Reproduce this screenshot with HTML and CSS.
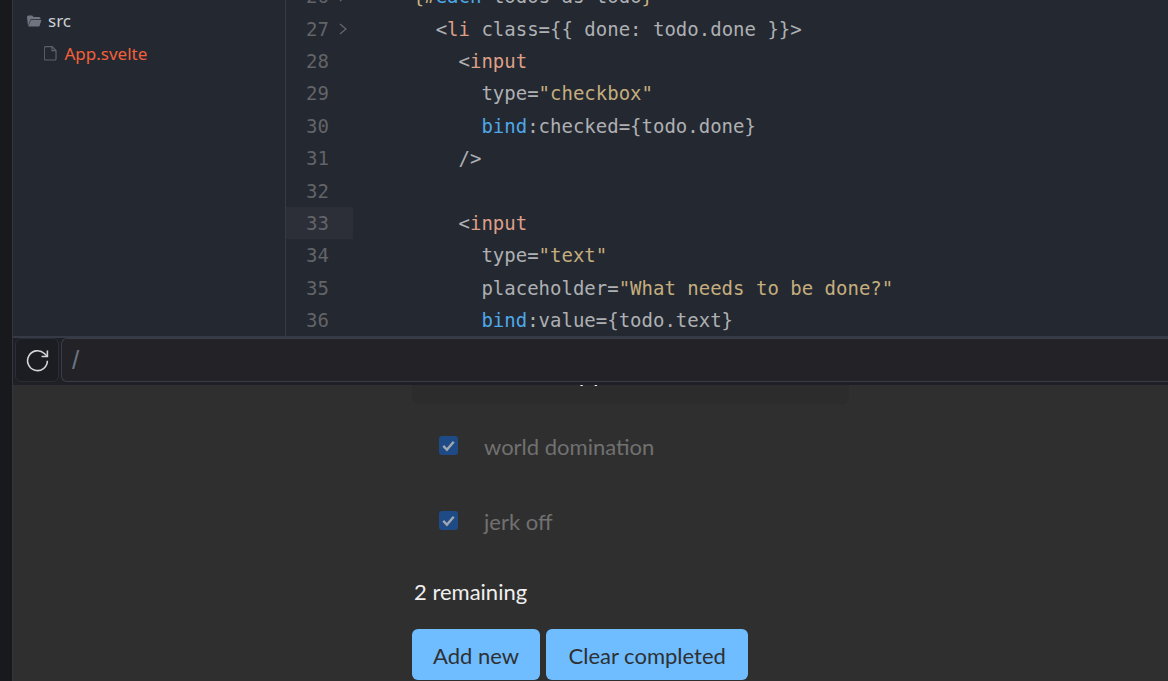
FILE: index.html
```html
<!DOCTYPE html>
<html lang="en">
<head>
<meta charset="utf-8">
<title>App.svelte</title>
<link rel="stylesheet" href="styles.css">
</head>
<body>
<div class="rail"></div>
<main class="app">
  <section class="workspace">
    <aside class="sidebar">
      <div class="folder">
        <svg class="folder-icon" viewBox="0 0 15 12"><path d="M0 2a1.5 1.5 0 0 1 1.5-1.5h3.6l1.5 1.6h5.4a1.5 1.5 0 0 1 1.5 1.5v.6H3.6L1 11z"/><path d="M3.9 5h10.6l-2.2 6.4H1.2z"/></svg>
        <span>src</span>
      </div>
      <div class="file">
        <svg class="file-icon" viewBox="0 0 13 15"><path d="M1.5.7h6.6l3.9 3.9v8.2a1.2 1.2 0 0 1-1.2 1.2H1.5a1.2 1.2 0 0 1-1.2-1.2V1.9A1.2 1.2 0 0 1 1.5.7zM8 .7v3.9h4"/></svg>
        <span>App.svelte</span>
      </div>
    </aside>
    <div class="editor">
      <div class="lines">
        <div class="line"><span class="num">26</span><span class="fold"><svg viewBox="0 0 8 12"><path d="M1 1 7 6 1 11"/></svg></span><span class="code">    <span class="p">{</span><span class="p">#</span><span class="kw">each</span> todos as todo<span class="p">}</span></span></div>
        <div class="line"><span class="num">27</span><span class="fold"><svg viewBox="0 0 8 12"><path d="M1 1 7 6 1 11"/></svg></span><span class="code">      &lt;<span class="tag">li</span> class={{ done: todo.done }}&gt;</span></div>
        <div class="line"><span class="num">28</span><span class="fold"></span><span class="code">        &lt;<span class="tag">input</span></span></div>
        <div class="line"><span class="num">29</span><span class="fold"></span><span class="code">          type=<span class="str">"checkbox"</span></span></div>
        <div class="line"><span class="num">30</span><span class="fold"></span><span class="code">          <span class="kw">bind</span>:checked={todo.done}</span></div>
        <div class="line"><span class="num">31</span><span class="fold"></span><span class="code">        /&gt;</span></div>
        <div class="line"><span class="num">32</span><span class="fold"></span><span class="code"></span></div>
        <div class="line active"><span class="num">33</span><span class="fold"></span><span class="code">        &lt;<span class="tag">input</span></span></div>
        <div class="line"><span class="num">34</span><span class="fold"></span><span class="code">          type=<span class="str">"text"</span></span></div>
        <div class="line"><span class="num">35</span><span class="fold"></span><span class="code">          placeholder=<span class="str">"What needs to be done?"</span></span></div>
        <div class="line"><span class="num">36</span><span class="fold"></span><span class="code">          <span class="kw">bind</span>:value={todo.text}</span></div>
      </div>
    </div>
  </section>
  <div class="toolbar">
    <button class="reload" type="button" aria-label="Reload">
      <svg viewBox="0 0 24 24"><path d="M20.8 12.2a8.8 8.8 0 1 1-2.7-6.4L20.8 8.4"/><path d="M20.8 3.2v5.2h-5.2"/></svg>
    </button>
    <div class="address">/</div>
  </div>
  <section class="preview">
    <div class="content">
      <div class="card"><span class="clipped">pp</span></div>
      <ul class="todos">
        <li class="todo"><span class="check"><svg viewBox="0 0 20 20"><path d="M4.5 10.5 8.3 14.5 15.5 6"/></svg></span><span class="label">world domination</span></li>
        <li class="todo"><span class="check"><svg viewBox="0 0 20 20"><path d="M4.5 10.5 8.3 14.5 15.5 6"/></svg></span><span class="label">jerk off</span></li>
      </ul>
      <p class="remaining">2 remaining</p>
      <div class="actions">
        <button class="btn" type="button">Add new</button>
        <button class="btn btn-wide" type="button">Clear completed</button>
      </div>
    </div>
  </section>
</main>
</body>
</html>
```
FILE: styles.css
```css
* { box-sizing: border-box; }
html, body { margin: 0; height: 100%; overflow: hidden; }
body { display: flex; width: 1168px; height: 681px; background: #2f2f2f; font-family: "Noto Sans", sans-serif; }
.rail { width: 12px; flex: none; background: #18191d; }
.app { flex: 1; min-width: 0; display: flex; flex-direction: column; border-left: 1px solid #33363f; }

.workspace { height: 336px; flex: none; display: flex; background: #242831; overflow: hidden; }
.sidebar { width: 273px; flex: none; padding-top: 4px; border-right: 1px solid #363a45; font-size: 17px; }
.folder { height: 33px; display: flex; align-items: center; gap: 6px; padding-left: 14px; color: #ccd0d6; }
.folder-icon { width: 15px; height: 12px; fill: #6f7480; }
.file { height: 33px; display: flex; align-items: center; gap: 7.5px; padding-left: 31px; color: #f4603a; }
.file-icon { width: 13px; height: 15px; fill: none; stroke: #5d616c; stroke-width: 1.2; }

.editor { flex: 1; min-width: 0; overflow: hidden; }
.lines { margin-top: -20px; font-family: "DejaVu Sans Mono", monospace; font-size: 19px; }
.line { height: 32.4px; display: flex; align-items: center; white-space: pre; color: #aeb0b3; }
.num { width: 43px; flex: none; text-align: right; color: #626468; }
.fold { width: 24px; flex: none; display: flex; justify-content: center; padding-left: 4px; }
.fold svg { width: 8px; height: 12px; fill: none; stroke: #686a70; stroke-width: 1.1; }
.line.active .num, .line.active .fold { background: #2c2f38; height: 100%; display: flex; align-items: center; }
.line.active .num { justify-content: flex-end; }
.code { padding-left: 14px; }
.p { color: #c8b27f; }
.kw { color: #4ea8e8; }
.tag { color: #dd9f88; }
.str { color: #c4ae7e; }

.toolbar { height: 49px; flex: none; display: flex; gap: 2px; padding: 0 0 0 2px; background: #1f2025; border-top: 2px solid #363946; }
.reload { width: 44px; height: 44px; flex: none; padding: 0; display: flex; align-items: center; justify-content: center; background: #1c1d22; border: 1px solid #2a2d37; border-radius: 6px; }
.reload svg { width: 27px; height: 27px; fill: none; stroke: #d6d6d8; stroke-width: 1.4; }
.address { flex: 1; height: 44px; padding-left: 10px; line-height: 42px; font-family: "Liberation Sans", sans-serif; font-size: 26px; color: #6b7485; background: #222227; border: 1px solid #3a3d49; border-right: 0; border-radius: 6px 0 0 6px; }

.preview { flex: 1; min-height: 0; overflow: hidden; }
.content { width: 440px; margin-left: 399px; display: flex; flex-direction: column; font-family: Lato, sans-serif; font-size: 22px; }
.card { height: 19px; margin-right: 3px; position: relative; background: #2c2c2c; border-radius: 0 0 8px 8px; overflow: hidden; }
.clipped { position: absolute; left: 167px; top: -25px; color: #fff; letter-spacing: 2px; }
.todos { list-style: none; margin: 0; padding: 4px 0 0 27px; color: #717171; }
.todo { height: 75px; display: flex; align-items: center; gap: 26px; }
.label { padding-top: 2px; }
.check { width: 19px; height: 19px; flex: none; background: #1e4a85; border-radius: 3px; display: flex; }
.check svg { width: 19px; height: 19px; fill: none; stroke: #9fa7b2; stroke-width: 2.6; }
.remaining { margin: 13px 0 16px; padding: 0 0 0 2px; height: 42px; line-height: 42px; color: #f0f0f0; }
.actions { display: flex; gap: 6px; }
.btn { height: 51px; padding: 2px 21px 0; background: #6fbdfe; color: #2e3034; border: 0; border-radius: 6px; font: inherit; }
.btn-wide { padding: 2px 22.5px 0; }
```
